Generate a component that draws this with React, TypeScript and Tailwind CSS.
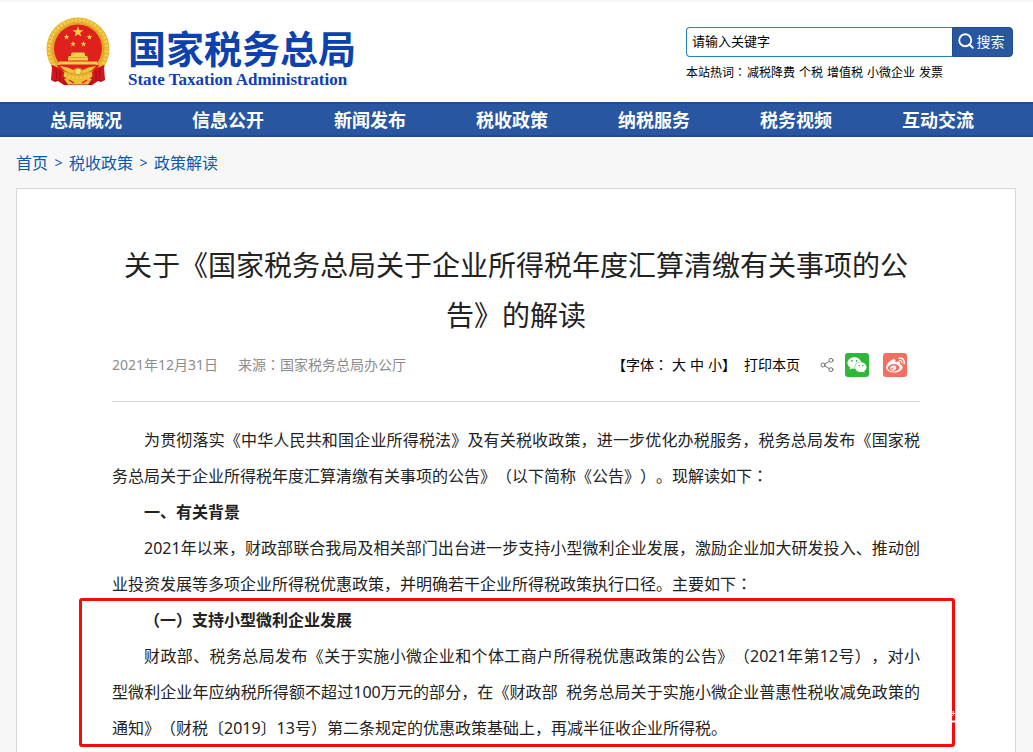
import React from "react";
import { Search, Share2 } from "lucide-react";
import { FaWeibo, FaWeixin } from "react-icons/fa";

const NAV = ["总局概况", "信息公开", "新闻发布", "税收政策", "纳税服务", "税务视频", "互动交流"];
const HOT_WORDS = ["减税降费", "个税", "增值税", "小微企业", "发票"];
const CRUMBS = ["首页", "税收政策", "政策解读"];

const STAR = "0,-10 2.4,-3.2 9.5,-3.1 3.8,1.2 5.9,8.1 0,4 -5.9,8.1 -3.8,1.2 -9.5,-3.1 -2.4,-3.2";

// Full-width colon with its dots centred in the em box; the tight leading keeps it from growing the line.
function Colon() {
  return (
    <span className="font-['Noto_Sans_CJK_JP',sans-serif] leading-none" lang="ja">
      ：
    </span>
  );
}

function Emblem() {
  return (
    <svg viewBox="0 0 66 70" className="h-[70px] w-[66px] shrink-0" aria-hidden="true">
      <path d="M5 45 L7 52 L6 64 L10 66 L13 65 L19 69 H47 L53 65 L56 66 L60 64 L59 52 L61 45Z" fill="#b80f17" />
      <circle cx="33" cy="33" r="31.5" fill="#e8b32e" />
      <circle cx="33" cy="33" r="29" fill="none" stroke="#f4cc4c" strokeWidth="3" />
      <circle cx="33" cy="33" r="29" fill="none" stroke="#e3a828" strokeWidth="3" strokeDasharray="1 3" />
      <circle cx="33" cy="33" r="25.500" fill="none" stroke="#d99f22" strokeWidth="1" />
      <circle cx="33" cy="32.500" r="24" fill="#e0201d" />
      <g fill="#f5cf45">
        <polygon points={STAR} transform="translate(33 16) scale(.57)" />
        <polygon points={STAR} transform="translate(21.5 21) scale(.3)" />
        <polygon points={STAR} transform="translate(44.5 21) scale(.3)" />
        <polygon points={STAR} transform="translate(28 28) scale(.3)" />
        <polygon points={STAR} transform="translate(38.5 28) scale(.3)" />
        <path d="M26 38 L27 36.5 H39 L40 38 V40 H42 L43 42 V44.500 H23 V42 L24 40 H26Z" />
        <path d="M14 45.500 H52 L53 48.500 H13Z" />
      </g>
      <path d="M24 41.500H42" stroke="#d28b18" strokeWidth=".6" />
      <path d="M12 49 H54 L52 54 Q33 60 14 54Z" fill="#e0201d" />
      <path d="M7 49 Q15 52 19 56 L18 67 L13 64 L7 64Z" fill="#d5151c" />
      <path d="M59 49 Q51 52 47 56 L48 67 L53 64 L59 64Z" fill="#d5151c" />
      <path d="M11 53 L12 63 M15 55 L15 65 M55 53 L54 63 M51 55 L51 65" stroke="#9a0d14" />
      <path d="M15 50 Q24 51 28 54 Q33 50 38 54 Q42 51 51 50 Q46 57 38 57 Q33 62 28 57 Q20 57 15 50Z" fill="#f2c43a" />
      <circle cx="33" cy="55.500" r="3.500" fill="#f8df72" stroke="#cf8d18" />
      <path d="M19 63 Q25 60 29 63 Q33 65 37 63 Q41 60 47 63 L43 68.500 H23Z" fill="#f0bd34" />
      <path d="M24 64 L29 67 M42 64 L37 67" stroke="#d5151c" strokeWidth="1.200" />
    </svg>
  );
}

function Header() {
  return (
    <header className="flex h-[102px] items-start justify-between border-t-2 border-[#f7f7f7] bg-white pl-[45px] pr-5">
      <a href="#" className="flex items-start gap-[17px] pt-[14px] text-[#0c41ae]">
        <Emblem />
        <span className="flex flex-col gap-1 pt-3">
          <span className="text-[38px] font-bold leading-10">国家税务总局</span>
          <span className="font-['Liberation_Serif',serif] text-[17px] font-bold leading-4">
            State Taxation Administration
          </span>
        </span>
      </a>
      <div className="w-[327px] pt-[25px]">
        <form className="flex h-[30px]" onSubmit={(e) => e.preventDefault()}>
          <input
            type="text"
            aria-label="请输入关键字"
            defaultValue="请输入关键字"
            className="min-w-0 flex-1 rounded-l-[4px] border border-r-0 border-[#2484c6] bg-white px-[5px] text-[13px] text-black outline-none"
          />
          <button
            type="submit"
            className="flex w-[61px] items-center justify-center gap-[2px] rounded-r-[4px] border border-[#1d4d91] bg-[#2856a0] pb-0.5 pr-1 text-[14px] text-white"
          >
            <Search size={18} strokeWidth={2.4} aria-hidden="true" />
            搜索
          </button>
        </form>
        <p className="flex gap-px pt-[7px] text-[12px] leading-[18px] text-black">
          <span>
            本站热词
            <Colon />
          </span>
          <span className="flex gap-1">
            {HOT_WORDS.map((word) => (
              <a key={word} href="#">
                {word}
              </a>
            ))}
          </span>
        </p>
      </div>
    </header>
  );
}

function Toolbar() {
  return (
    <div className="flex h-12 items-center justify-between text-[14px]">
      <p className="flex gap-5 pb-0.5 text-[#8c8c8c]">
        <span>2021年12月31日</span>
        <span>
          来源
          <Colon />
          国家税务总局办公厅
        </span>
      </p>
      <div className="flex items-center pr-[13px] text-black">
        <div className="flex pb-0.5">
          <span>
            【字体
            <Colon />
          </span>
          <span className="flex gap-1 pl-1">
            <button type="button">大</button>
            <button type="button">中</button>
            <button type="button">小</button>
          </span>
          <span>】</span>
          <button type="button" className="ml-2">
            打印本页
          </button>
        </div>
        <button type="button" aria-label="分享" className="ml-[19px] text-[#666]">
          <Share2 size={16} strokeWidth={1.3} />
        </button>
        <button
          type="button"
          aria-label="微信"
          className="ml-[10px] flex size-6 items-center justify-center rounded-[3px] bg-[#2fb837] text-white"
        >
          <FaWeixin size={20} />
        </button>
        <button
          type="button"
          aria-label="微博"
          className="ml-[14px] flex size-6 items-center justify-center rounded-[3px] bg-[#f56f61] text-white"
        >
          <FaWeibo size={19} />
        </button>
      </div>
    </div>
  );
}

export default function App() {
  return (
    <div
      className="flex min-h-screen flex-col bg-[#f7f7f7] font-['Noto_Sans','Noto_Sans_CJK_SC',sans-serif] [text-spacing-trim:space-all]"
      lang="zh-CN"
    >
      <Header />
      <nav className="grid h-[35px] grid-cols-7 items-center border-y-2 border-[#1d4d91] bg-[#2856a0] pl-[15px] pr-6 pt-0.5 text-center text-[18px] font-bold text-white">
        {NAV.map((item) => (
          <a key={item} href="#">
            {item}
          </a>
        ))}
      </nav>
      <div className="flex flex-1 flex-col border-t-2 border-white pl-4 pr-[17px]">
        <ol className="flex h-[49px] items-center pb-0.5 text-[16px] text-[#0b57ae]">
          {CRUMBS.map((crumb, i) => (
            <li key={crumb} className="flex items-center">
              {i > 0 && <span className="w-[21px] text-center text-[14px]">&gt;</span>}
              <a href="#">{crumb}</a>
            </li>
          ))}
        </ol>
        <article className="flex-1 border border-b-0 border-[#d8d8d8] bg-white px-[95px] pt-[51px]">
          <h1 className="pb-px text-center text-[28px] leading-[50px] text-[#222]">
            关于《国家税务总局关于企业所得税年度汇算清缴有关事项的公告》的解读
          </h1>
          <Toolbar />
          <div className="mt-3 border-t border-[#d8d8d8] pt-5 text-justify indent-8 text-[16px] leading-9 text-[#222]">
            <p>
              为贯彻落实《中华人民共和国企业所得税法》及有关税收政策，进一步优化办税服务，税务总局发布《国家税务总局关于企业所得税年度汇算清缴有关事项的公告》（以下简称《公告》）。现解读如下
              <Colon />
            </p>
            <h2 className="font-bold">一、有关背景</h2>
            <p>
              2021年以来，财政部联合我局及相关部门出台进一步支持小型微利企业发展，激励企业加大研发投入、推动创业投资发展等多项企业所得税优惠政策，并明确若干企业所得税政策执行口径。主要如下
              <Colon />
            </p>
            <section className="relative">
              <h3 className="font-bold">（一）支持小型微利企业发展</h3>
              <p>
                财政部、税务总局发布《关于实施小微企业和个体工商户所得税优惠政策的公告》（2021年第12号），对小<span className="whitespace-nowrap">型微利</span>企业年应纳税所得额不超过100万元的部分，在《财政部&nbsp; 税务总局关于实施小微企业普惠性税收减免政策的通知》（财税〔2019〕13号）第二条规定的优惠政策基础上，再减半征收企业所得税。
              </p>
              <div className="pointer-events-none absolute -bottom-px -left-[33px] -right-[35px] -top-1 rounded-[3px] border-[3px] border-[#f80a05]">
                <svg viewBox="0 0 4 12" className="absolute -right-[3px] bottom-[21px] h-3 w-1" aria-hidden="true">
                  <path d="M1 0V2.500M0 2.500H4M2.500 0V4M0 4.500H2" stroke="#fff" strokeOpacity=".85" fill="none" />
                  <path d="M0 10.500H4" stroke="#fff" strokeWidth="2" fill="none" />
                </svg>
              </div>
            </section>
          </div>
        </article>
      </div>
    </div>
  );
}
